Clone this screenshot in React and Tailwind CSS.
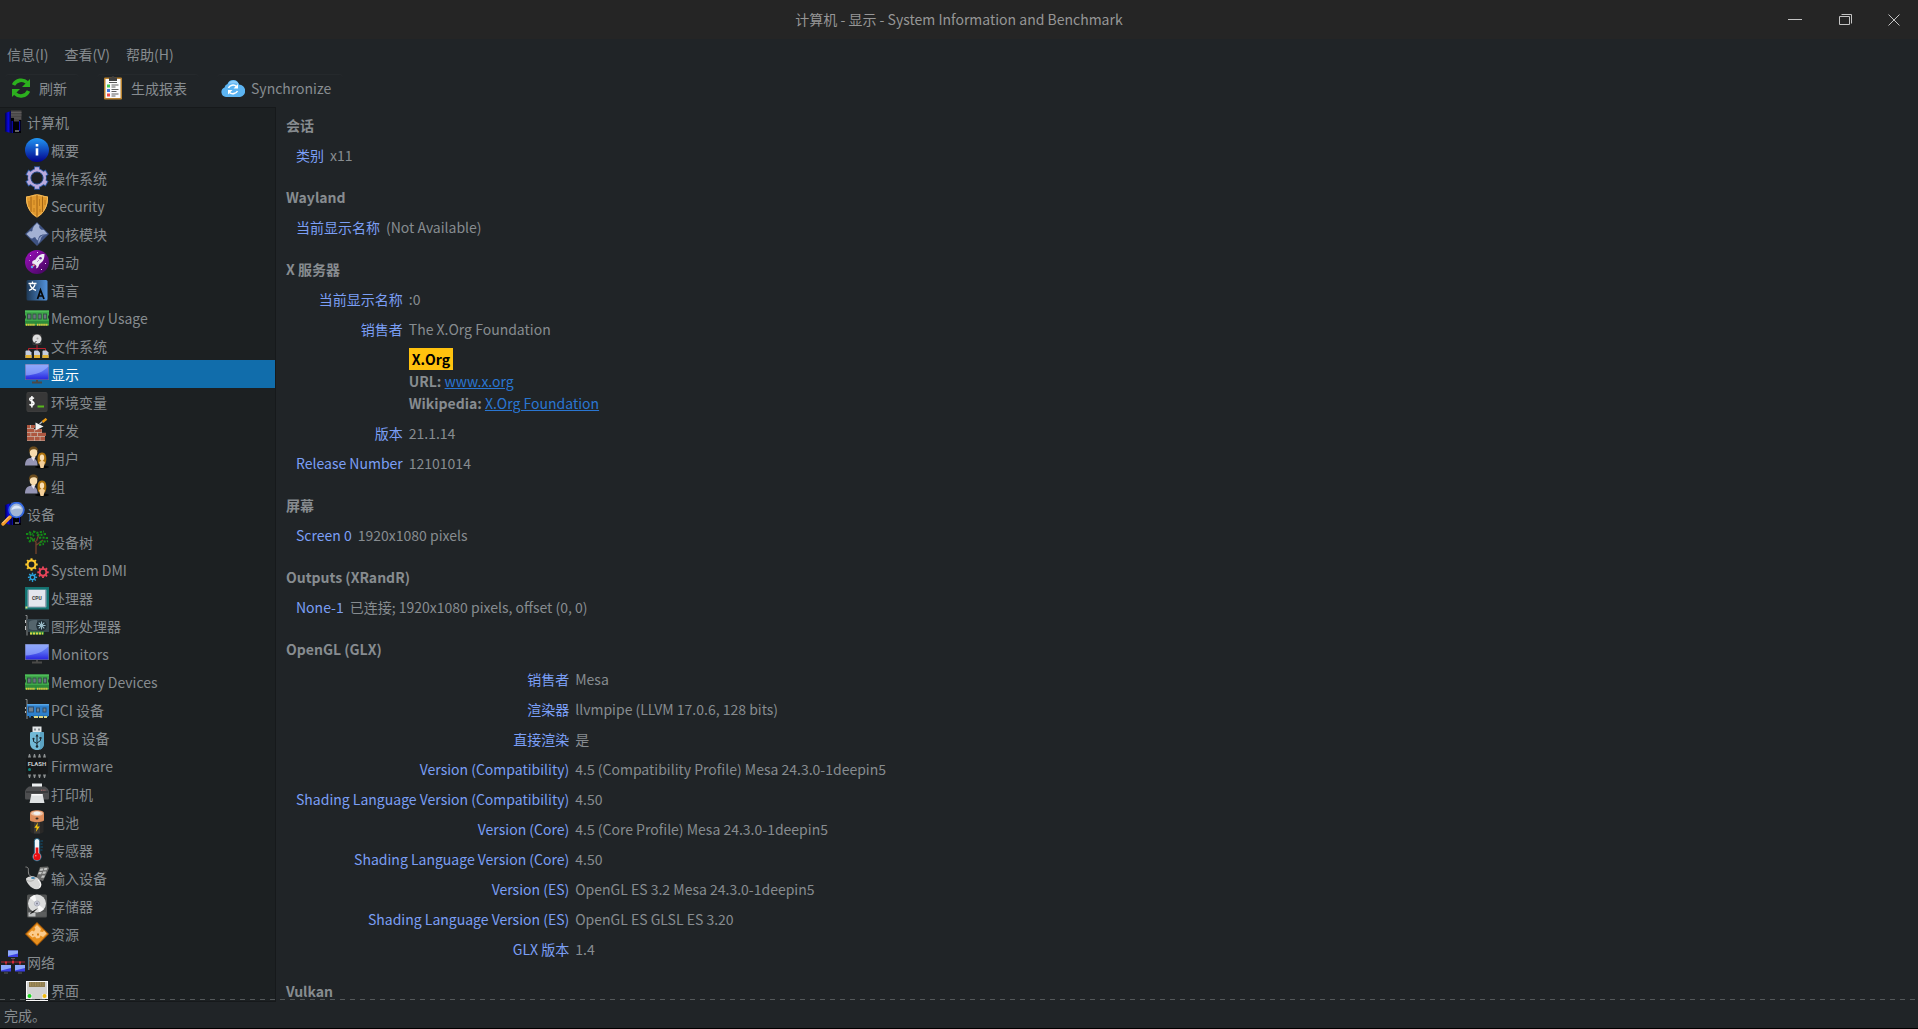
import { useState } from 'react';

const MonitorIcon = () => (
  <svg viewBox="0 0 24 24" className="size-6 shrink-0">
    <defs>
      <linearGradient id="screen" x1="0" y1="0" x2="0" y2="1">
        <stop offset="0" stopColor="#6f8cf5" />
        <stop offset="0.5" stopColor="#5468f0" />
        <stop offset="1" stopColor="#2a26e0" />
      </linearGradient>
    </defs>
    <rect x="0" y="2" width="24" height="16" fill="#6b6f8c" />
    <rect x="0.6" y="2.6" width="22.8" height="14.8" fill="url(#screen)" />
    <path d="M.6 2.600h22.800v1.600C19 9.500 11 13 .6 13.400z" fill="#a9c0ff" opacity=".55" />
    <path d="M11 18h2v1.500h4V21.500H7v-2h4z" fill="#4a4a48" />
  </svg>
);

const MemoryIcon = () => (
  <svg viewBox="0 0 24 24" className="size-6 shrink-0">
    <path d="M0 4.500h24v5h-.8v3h.8v7H0v-7h.8v-3H0z" fill="#3fa84a" />
    <path d="M0 4.500h24V6H0z" fill="#4fbd59" />
    <path d="M0 15h24v3H0z" fill="#2d8b3b" />
    <path d="M2 7.500h4.500v6H2zM7.500 7.500h4v6h-4zM12.700 7.500h4v6h-4zM18 7.500h4v6h-4z" fill="#2d5440" />
    <path d="M3 8.500h2.500v4H3zM8.300 8.500h2.400v4H8.300zM13.500 8.500h2.400v4h-2.400zM18.800 8.500h2.400v4h-2.400z" fill="#6c7480" />
    <path d="M1 18.800h9M12 18.800h11" stroke="#e3c83f" strokeWidth="2" strokeDasharray="1.500 .6" />
  </svg>
);

const PeopleIcon = () => (
  <svg viewBox="0 0 24 24" className="size-6 shrink-0">
    <ellipse cx="17" cy="21" rx="7" ry="1.500" fill="#050505" />
    <path d="M0 19.500c0-5 2-7.500 6-7.500s6.500 2 6.500 7.500z" fill="#9595b4" />
    <path d="M6 11l2.500 4 2-4z" fill="#e9e6ef" />
    <ellipse cx="8.500" cy="6.500" rx="3.800" ry="5" fill="#f7dcae" />
    <path d="M4 7C3.500 2.500 5.500.6 8.700.6c3.500 0 4.600 2.400 4.200 6-.8-3-2-3.600-4.200-3.400C6 3.400 5 4.500 4 7z" fill="#6b4c1d" />
    <path d="M17 6.500c3.500 0 4.300 3 4.300 6.500s-1 5.500-2 5.500h-4.600c-1.400 0-2.200-2.500-2.200-5.500 0-3.500 1-6.500 4.500-6.500z" fill="#ad720c" />
    <path d="M17 8.500c1.700 0 2.200 1.500 2.200 3.300S18.300 15 17 15s-2.200-1.500-2.200-3.200S15.300 8.500 17 8.500z" fill="#fbe0b5" />
    <path d="M14 16l3-1.500 3 1.500-1.500 6h-3z" fill="#f3cf9a" />
  </svg>
);

const ComputerShape = () => (
  <>
    <defs>
      <linearGradient id="tower" x1="0" y1="0" x2="1" y2="0">
        <stop offset="0" stopColor="#000048" />
        <stop offset="0.55" stopColor="#0906e8" />
        <stop offset="1" stopColor="#04043a" />
      </linearGradient>
    </defs>
    <path d="M4 3l6-2v22l-6-1.500z" fill="url(#tower)" />
    <path d="M10 1h10v22H10z" fill="#020204" />
    <path d="M10.500 11h1.500v12h-1.500zM18 11h1.200v10H18z" fill="#0a08a0" />
    <path d="M10 .5h10.500v9.500h-2.500v1.500h-5V8h-3z" fill="#484646" />
    <path d="M10 2.500h10.500M10 5h10.500M13 8h7" stroke="#6a6767" strokeWidth=".7" />
    <path d="M14 20.500h4v1h-4z" fill="#c5c5c5" />
  </>
);

const gear = (cx, cy, r, color, width) => (
  <g stroke={color} fill="none">
    <circle cx={cx} cy={cy} r={r} strokeWidth={width} />
    {[0, 45, 90, 135, 180, 225, 270, 315].map((a) => (
      <path key={a} d={`M${cx} ${cy - r - 0.5}v-1.800`} strokeWidth={width} transform={`rotate(${a} ${cx} ${cy})`} />
    ))}
  </g>
);

const icons = {
  computer: <svg viewBox="0 0 24 24" className="size-6 shrink-0"><ComputerShape /></svg>,
  summary: (
    <svg viewBox="0 0 24 24" className="size-6 shrink-0">
      <defs>
        <linearGradient id="info" x1="0" y1="0" x2="0" y2="1">
          <stop offset="0" stopColor="#2196f3" />
          <stop offset="1" stopColor="#02028c" />
        </linearGradient>
      </defs>
      <circle cx="12" cy="12" r="12" fill="url(#info)" />
      <path d="M10.700 6h2.600v2.500h-2.600zM10.700 10.300h2.600v7.200h-2.600z" fill="#fff" />
    </svg>
  ),
  os: (
    <svg viewBox="0 0 24 24" className="size-6 shrink-0">
      <g stroke="#2d57a0" fill="none">
        <circle cx="12" cy="12" r="7.500" strokeWidth="4.500" />
        {[0, 60, 120, 180, 240, 300].map((a) => (
          <path key={a} d="M12 4V.3" strokeWidth="6" transform={`rotate(${a} 12 12)`} />
        ))}
      </g>
      <g stroke="#b9aadd" fill="none">
        <circle cx="12" cy="12" r="7.600" strokeWidth="2.800" />
        {[0, 60, 120, 180, 240, 300].map((a) => (
          <path key={a} d="M12 4V1.200" strokeWidth="4.200" transform={`rotate(${a} 12 12)`} />
        ))}
      </g>
      <circle cx="12" cy="12" r="6" fill="#1c2022" stroke="#23477e" />
    </svg>
  ),
  security: (
    <svg viewBox="0 0 24 24" className="size-6 shrink-0">
      <path d="M1 2.500C5 2.500 9 .3 12 .3s7 2.200 11 2.200C23.500 12 19 20 12 23.700 5 20 .5 12 1 2.500z" fill="#e29a2e" />
      <path d="M1.500 3C5 3 9 1 12 1s7 2 10.500 2c.3 8.500-3.500 16-10.500 19.700C5 19 1.200 11.500 1.500 3z" fill="none" stroke="#f4bd5e" />
      <path d="M6 2.500v15.500M12 1v22M17.500 2.500V18" stroke="#9c5f13" strokeWidth=".9" />
      <path d="M4 7v6M9 6v5M9 14v4M14.500 5v7M15 15v3M20 6v5" stroke="#b97519" strokeWidth=".8" />
    </svg>
  ),
  kernel: (
    <svg viewBox="0 0 24 24" className="size-6 shrink-0">
      <path d="M12 0l12 12-12 12L0 12z" fill="#3e5282" />
      <path d="M12 1l2.500 2.500c-1 2 .5 3 1.500 4 1 1 2-.5 3 .5l3.500 4-3.500.5c-4 0-5.500 2-6 6L11 17c0-2-2-2-3-1s-2 .5-3-.500L1.500 12 5 9c1.500 1 3 0 2.500-2L9 4z" fill="#a3b1d3" />
      <path d="M21 13c-3 0-5 1.500-5.500 5l-2 3.500c-1-5 2-9 7.500-8.500z" fill="#8b9cc6" />
    </svg>
  ),
  boot: (
    <svg viewBox="0 0 24 24" className="size-6 shrink-0">
      <defs>
        <linearGradient id="boot" x1="0" y1="0" x2="1" y2="1">
          <stop offset="0" stopColor="#a010c0" />
          <stop offset="1" stopColor="#3d0658" />
        </linearGradient>
      </defs>
      <circle cx="12" cy="12" r="12" fill="url(#boot)" />
      <path d="M19.500 4c-4-.2-7 1.500-9 5.500L7.500 11 7 13.500l2.500.5 2 2-.5 2.500 2-1 1.500-3.500c4-2.500 5-5.500 5-10z" fill="#ececf4" />
      <circle cx="15.500" cy="8.300" r="1.300" fill="#74309c" />
      <path d="M12 12l2-2" stroke="#b38fd0" />
      <path d="M9.500 14.500l-2 2" stroke="#f5b07e" strokeWidth="1.500" />
      <circle cx="7" cy="17" r="1.200" fill="#5ba8f2" />
      <path d="M5 5h1v1H5zM12 2h1v1h-1zM16 19h1v1h-1zM20 13h1v1h-1zM4 10h.7v.7H4z" fill="#f0d8ff" />
    </svg>
  ),
  language: (
    <svg viewBox="0 0 24 24" className="size-6 shrink-0">
      <defs>
        <linearGradient id="lang" x1="0" y1="0" x2="1" y2="0">
          <stop offset="0" stopColor="#1d3855" />
          <stop offset="1" stopColor="#5292dc" />
        </linearGradient>
      </defs>
      <rect x="1.500" y="2" width="21" height="20.500" rx="1.500" fill="url(#lang)" />
      <path d="M3.500 5.500h8M7.500 3.500v2M5 6.500c.8 3 3 4.800 6 5.800M10 6.500c-.8 3-3 4.800-6 5.800" stroke="#fff" strokeWidth="1.300" fill="none" />
      <path d="M12.500 21l3-9 3.500 9M13.500 18h4.500" stroke="#080808" strokeWidth="1.700" fill="none" />
    </svg>
  ),
  memory: <MemoryIcon />,
  filesystem: (
    <svg viewBox="0 0 24 24" className="size-6 shrink-0">
      <path d="M12 11v5M3.500 17v-2.500h17V17" stroke="#b5212c" fill="none" />
      <rect x="7.500" y="0" width="9" height="11" rx="1" fill="#3a3a3a" />
      <circle cx="12" cy="5" r="4.500" fill="#dedede" />
      <circle cx="12.500" cy="4.500" r="1" fill="#aaa" />
      <path d="M8.500 10l3-3" stroke="#222" />
      {[0.5, 9, 17.5].map((x) => (
        <g key={x}>
          <path d={`M${x} 17.500q0-1 1-1h3l2 2v5.500h-6z`} fill="#c4cde0" />
          <path d={`M${x} 21h6v3h-6z`} fill="#e0b033" />
        </g>
      ))}
    </svg>
  ),
  display: <MonitorIcon />,
  env: (
    <svg viewBox="0 0 24 24" className="size-6 shrink-0">
      <rect x="1.500" y="2" width="21" height="20" rx="2" fill="#414141" />
      <rect x="2" y="2.500" width="20" height="19" rx="2" fill="#383838" />
      <path d="M9 8.500C7.500 7.200 4.700 7.500 4.700 9.300c0 2.200 4.300 1.700 4.300 4 0 2-2.700 2.300-4.500 1M6.900 6v11.500" stroke="#fff" strokeWidth="1.500" fill="none" />
      <path d="M12.500 15.500h6.500v2h-6.500z" fill="#58b81c" />
    </svg>
  ),
  dev: (
    <svg viewBox="0 0 24 24" className="size-6 shrink-0">
      <path d="M2 7h7v4h8v4h4v3h-1v5H2z" fill="#c9b5a8" />
      <path d="M2 7h3v3H2zM6 7h4v3H6zM2 10.700h7v3.300H2zM9.700 11h7v3H9.700zM2 14.700h3.500V18H2zM6.200 14.700h6V18h-6zM13 14.700h8V18h-8zM2 18.700h7v3.800H2zM9.700 18.700h5v3.800h-5zM15.400 18.700H20v3.800h-4.600z" fill="#ad5740" />
      <path d="M10.500 4.500l8 4-8 4z" fill="#f1f3f3" />
      <path d="M14.500 6l3-2.500" stroke="#bfc4c8" strokeWidth="1.200" />
      <path d="M17.500 4l4-3.200" stroke="#ec9a12" strokeWidth="2.400" />
    </svg>
  ),
  people: <PeopleIcon />,
  devices: (
    <svg viewBox="0 0 24 24" className="size-6 shrink-0">
      <ComputerShape />
      <path d="M2 22l7-7" stroke="#f29a28" strokeWidth="3.400" strokeLinecap="round" />
      <path d="M1.500 21l6.500-6.500" stroke="#ffd69b" strokeWidth="1" />
      <circle cx="15.500" cy="8" r="7.300" fill="#a2b6d6" stroke="#3368e0" strokeWidth="1.800" />
      <path d="M10.500 8c.5-3 2.500-4.500 5-4.500S20 5 20.500 7c-3-.8-6.500-.5-10 1z" fill="#dbe7f8" />
    </svg>
  ),
  tree: (
    <svg viewBox="0 0 24 24" className="size-6 shrink-0">
      <path d="M11 24V12L5 7M11.500 15L18 10M11.500 11L14 4" stroke="#6f412b" strokeWidth="1.400" fill="none" />
      <g stroke="#148a18" strokeWidth="2" strokeDasharray="2.300 1.200" fill="none">
        <path d="M1 4c3 0 5 0 8 2M2 7.500c3 2 4 0 8 2M4 12c2-2 3-2 6-1" />
        <path d="M8 1.500c3 0 3 2 6 1l5-1M12 5c3 1 5-1 9-1M14 8c3-1 5 0 9 0M15 12c3-1 5 0 8-1M14 15l5-1M4 2l4 2" />
      </g>
    </svg>
  ),
  dmi: (
    <svg viewBox="0 0 24 24" className="size-6 shrink-0">
      {gear(6.5, 6.5, 3.9, '#fcc82d', 2)}
      {gear(18, 14.3, 3.4, '#e8455a', 1.9)}
      {gear(7.5, 19.3, 2.3, '#29a5e2', 1.4)}
    </svg>
  ),
  cpu: (
    <svg viewBox="0 0 24 24" className="size-6 shrink-0">
      <rect x="0" y="1" width="24" height="22.500" fill="#16706e" />
      <rect x="1.500" y="2.500" width="21" height="19.500" fill="#0c7c7a" />
      <rect x="2.500" y="3.500" width="19" height="18" rx="1" fill="#9aa4b4" />
      <rect x="4" y="4" width="16" height="16.500" fill="#e3e6ed" />
      <text x="12" y="13.500" textAnchor="middle" className="fill-[#3a3a3a] font-['Roboto',sans-serif] text-[5px] font-bold">CPU</text>
      <path d="M.5 20.500h2v2h-2z" fill="#d6e07a" />
    </svg>
  ),
  gpu: (
    <svg viewBox="0 0 24 24" className="size-6 shrink-0">
      <path d="M.5 1.500h1.500V21.500" stroke="#8b8f90" fill="none" />
      <path d="M.5 6v3M.5 12v4" stroke="#c0c4c4" />
      <path d="M2 5h22v13H3z" fill="#37474f" />
      <path d="M4 8c2-2 5-2 8-2v10c-4 0-8 0-8-2z" fill="#55656d" />
      <circle cx="16.500" cy="11.500" r="5.300" fill="#1f2c34" />
      <path d="M16.500 7.500v8M12.500 11.500h8M13.700 8.700l5.600 5.600M19.300 8.700l-5.600 5.600" stroke="#9bbcc9" strokeWidth="1.100" />
      <path d="M5 19h14" stroke="#388e3c" strokeWidth="3" />
      <path d="M5 19.500h13" stroke="#d9d348" strokeWidth="2" strokeDasharray="2 1" />
    </svg>
  ),
  pci: (
    <svg viewBox="0 0 24 24" className="size-6 shrink-0">
      <path d="M.5 1.500h1.500V21" stroke="#8b8f90" fill="none" />
      <path d="M.5 9v2M.5 13v2" stroke="#b0b4b4" />
      <path d="M2 6h22v12H2z" fill="#2f80cb" />
      <path d="M2 6h22v1.500H2z" fill="#56a5e6" />
      <path d="M3 8.500h6v6H3zM11 9.500h4v5h-4zM17.500 9.500h4v5h-4z" fill="#2e4d6c" />
      <path d="M4 9.500h4v4H4zM12 10.500h2v3h-2zM18.500 10.500h2v3h-2z" fill="#6f8292" />
      <path d="M4 18.500h2M8 18h15" stroke="#2672b5" strokeWidth="2" />
      <path d="M9 19h13" stroke="#dcd787" strokeWidth="2" strokeDasharray="4 1" />
    </svg>
  ),
  usb: (
    <svg viewBox="0 0 24 24" className="size-6 shrink-0">
      <path d="M7.500.5h9V7h-9z" fill="#e2e6e8" />
      <path d="M9 2.500h2v2H9zM13 2.500h2v2h-2z" fill="#8b9296" />
      <path d="M5 7.500c0-1 .5-1.500 1.500-1.500h11c1 0 1.500.5 1.500 1.500V17c0 4.500-3 7-7 7s-7-2.500-7-7z" fill="#72b9d6" />
      <path d="M15 6h2.500c1 0 1.500.5 1.500 1.500V17c0 4-2 6-4 6.700z" fill="#5aa2c2" />
      <path d="M12 9.500v11M8.500 13v2.500l3.500 2M15.500 12v2.500L12 17" stroke="#1d2b33" strokeWidth="1" fill="none" />
      <path d="M12 8l1.500 2.500h-3z" fill="#1d2b33" />
      <circle cx="12" cy="20.500" r="1.300" fill="#1d2b33" />
      <circle cx="8.500" cy="12.800" r="1.100" fill="#1d2b33" />
      <path d="M14.500 11h2v2h-2z" fill="#1d2b33" />
    </svg>
  ),
  firmware: (
    <svg viewBox="0 0 24 24" className="size-6 shrink-0">
      <rect x="1" y="3.500" width="22" height="17" rx="2" fill="#17191a" />
      <path d="M3 3.500h3L5 0H4zM8 3.500h3L10 0H9zM13 3.500h3L15 0h-1zM18 3.500h3L20 0h-1zM3 20.500h3L5 24H4zM8 20.500h3L10 24H9zM13 20.500h3L15 24h-1zM18 20.500h3L20 24h-1z" fill="#8d9192" />
      <text x="12" y="11.500" textAnchor="middle" className="fill-[#c9cdce] font-['Roboto',sans-serif] text-[6px] font-bold">FLASH</text>
      <circle cx="4.500" cy="15.500" r="1.500" fill="#0c8a80" />
    </svg>
  ),
  printer: (
    <svg viewBox="0 0 24 24" className="size-6 shrink-0">
      <path d="M7 1.500h10V6H7z" fill="#eceff0" />
      <path d="M4 4.500h16c2.500 1.500 4 3 4 6v5.500c0 1-.5 1.500-1.500 1.500h-21C.5 17.500 0 17 0 16v-5.500c0-3 1.500-4.500 4-6z" fill="#4d4e50" />
      <path d="M1 9.500h22v1H1z" fill="#29292b" />
      <path d="M16 8.200h5" stroke="#b46a6a" strokeWidth="1" strokeDasharray="1 .7" />
      <path d="M6.500 12h11l2 9h-15z" fill="#dfe2e3" />
      <path d="M6.500 12h11v1.500h-11z" fill="#fafafa" />
    </svg>
  ),
  battery: (
    <svg viewBox="0 0 24 24" className="size-6 shrink-0">
      <path d="M5.500 9h13v13c-2 2.500-11 2.500-13 0z" fill="#292827" />
      <path d="M9 10h6v13.500H9z" fill="#3d3a37" />
      <path d="M5 3.500C5 1.500 8 .3 12 .3s7 1.200 7 3.200v7c-3 2.200-11 2.200-14 0z" fill="#dd8e5d" />
      <ellipse cx="12" cy="3.500" rx="6" ry="2.500" fill="#ecc5ab" />
      <ellipse cx="12" cy="3.200" rx="3.500" ry="1.700" fill="#f1f1f0" />
      <ellipse cx="12" cy="8.500" rx="1.500" ry="1" fill="#3b2a20" />
      <path d="M13 12.500l-3.700 5.300h2.400L10.800 22l4-5.500h-2.600z" fill="#f8c60c" />
    </svg>
  ),
  sensor: (
    <svg viewBox="0 0 24 24" className="size-6 shrink-0">
      <path d="M9.300 3.200a2.700 2.700 0 015.400 0V15.300a4.300 4.300 0 11-5.400 0z" fill="#eef5fa" stroke="#0f5377" strokeWidth=".9" />
      <path d="M10.600 9.500h2.800V16h-2.800z" fill="#e80f14" />
      <circle cx="12" cy="18.700" r="3.600" fill="#e80f14" />
      <circle cx="10.800" cy="17.800" r=".8" fill="#ff9090" />
      <path d="M15.500 3h2.500M15.500 6h2M15.500 9h2.500M15.500 12h2" stroke="#0f5377" strokeWidth="1" />
    </svg>
  ),
  input: (
    <svg viewBox="0 0 24 24" className="size-6 shrink-0">
      <path d="M15 1l8-.5 1 2L18 15l-7-2z" fill="#6b6b6a" />
      <path d="M15.500 2.500h3l-1 2.300h-3zM19.500 2h3l-1 2.300h-3zM14 6h3l-1 2.300h-3zM18.200 5.500h3l-1 2.300h-3zM17 9.500h3l-1 2.300h-3z" fill="#c4c5c4" />
      <path d="M.5 1c4 0 2.500 3 3 6s2 3 4 4" stroke="#8c8c8b" fill="none" />
      <path d="M1 12.500C4 9.500 9 9.500 12.500 12c4 3 5 7.500 2.500 10-3 2.500-8 1-11-3C2.500 17 1 15 1 12.500z" fill="#d8d8d7" />
      <path d="M2 14.500c4 1.500 7 .5 9-3.500" stroke="#a3a39f" fill="none" strokeWidth=".8" />
      <ellipse cx="8" cy="12" rx="2" ry="1.100" fill="#3f83ae" />
      <path d="M13 14c3 3 3.500 6 1 7.500" stroke="#fff" fill="none" />
    </svg>
  ),
  storage: (
    <svg viewBox="0 0 24 24" className="size-6 shrink-0">
      <rect x="2" y=".5" width="20" height="23" rx="1.500" fill="#505252" />
      <path d="M3 18h18v4.500H3z" fill="#5c5e5e" />
      <path d="M3.500 18.500h7v4h-7z" fill="#c1c3c3" />
      <circle cx="12" cy="9.500" r="9" fill="#dbdcdc" />
      <path d="M12 9.500L5 4a9 9 0 015-3zM12 9.500l7 5.500a9 9 0 01-5 3z" fill="#f8f8f8" />
      <circle cx="12" cy="9.500" r="2.600" fill="#cdd0df" stroke="#9ea0ac" strokeWidth=".7" />
      <circle cx="12" cy="9.500" r=".9" fill="#787986" />
      <path d="M4.500 20.500l2.500-3 6-3.500-4.500 4.500z" fill="#1b1b1b" />
    </svg>
  ),
  resources: (
    <svg viewBox="0 0 24 24" className="size-6 shrink-0">
      <path d="M12 0l12 12-12 12L0 12z" fill="#a85a07" />
      <path d="M12 1.300L22.700 12 12 22.700 1.300 12z" fill="#e8901e" />
      <path d="M12 3l4 4-1 2.500 3 .5 1-1.500 2.500 3-3.500 3.500-2.500-1.500-1 2.500-3 .5-1.500-2-2.500 1L3 12l4-3.500 2 1L10.500 7 9.500 5.500z" fill="#fbcb8c" />
      <path d="M12 11.500h2v2h-2zM7 12h1.500v1.500H7z" fill="#dd8212" />
    </svg>
  ),
  network: (
    <svg viewBox="0 0 24 24" className="size-6 shrink-0">
      <path d="M0 12h24M12 8v4M5 12v3M19 12v3" stroke="#a92430" />
      <path d="M11 11h2v2.500h-2zM4 11.500h2v2H4zM18 11.500h2v2h-2z" fill="#d62e38" />
      {[[7, 0.5], [0, 15], [14, 15]].map(([x, y]) => (
        <g key={`${x}-${y}`}>
          <rect x={x} y={y} width="10" height="6.500" fill="#3c40e4" />
          <path d={`M${x} ${y}h10v3l-10 2.500z`} fill="#8fa9fa" />
          <path d={`M${x + 3} ${y + 8}h4`} stroke="#5d5f60" />
        </g>
      ))}
    </svg>
  ),
  interfaces: (
    <svg viewBox="0 0 24 24" className="size-6 shrink-0">
      <rect x="1" y="3" width="22" height="20" fill="#fafafa" />
      <rect x="2" y="4" width="20" height="18" fill="#d2d2d1" />
      <path d="M4 4h16v5H4z" fill="#8d7c50" />
      <path d="M5.500 4v4M8 4v4M10.500 4v4M13 4v4M15.500 4v4M18 4v4" stroke="#a8925a" strokeWidth=".8" />
      <path d="M2 16h5v6H2zM17 16h5v6h-5z" fill="#ededed" />
      <circle cx="4.500" cy="18" r="2" fill="#1ad61e" />
      <circle cx="19.500" cy="18" r="2" fill="#f0b90e" />
    </svg>
  ),
};

const tree = [
  { label: '计算机', icon: 'computer', root: true },
  { label: '概要', icon: 'summary' },
  { label: '操作系统', icon: 'os' },
  { label: 'Security', icon: 'security' },
  { label: '内核模块', icon: 'kernel' },
  { label: '启动', icon: 'boot' },
  { label: '语言', icon: 'language' },
  { label: 'Memory Usage', icon: 'memory' },
  { label: '文件系统', icon: 'filesystem' },
  { label: '显示', icon: 'display' },
  { label: '环境变量', icon: 'env' },
  { label: '开发', icon: 'dev' },
  { label: '用户', icon: 'people' },
  { label: '组', icon: 'people' },
  { label: '设备', icon: 'devices', root: true },
  { label: '设备树', icon: 'tree' },
  { label: 'System DMI', icon: 'dmi' },
  { label: '处理器', icon: 'cpu' },
  { label: '图形处理器', icon: 'gpu' },
  { label: 'Monitors', icon: 'display' },
  { label: 'Memory Devices', icon: 'memory' },
  { label: 'PCI 设备', icon: 'pci' },
  { label: 'USB 设备', icon: 'usb' },
  { label: 'Firmware', icon: 'firmware' },
  { label: '打印机', icon: 'printer' },
  { label: '电池', icon: 'battery' },
  { label: '传感器', icon: 'sensor' },
  { label: '输入设备', icon: 'input' },
  { label: '存储器', icon: 'storage' },
  { label: '资源', icon: 'resources' },
  { label: '网络', icon: 'network', root: true },
  { label: '界面', icon: 'interfaces' },
];

const XOrgVendor = () => (
  <>
    <p>The X.Org Foundation</p>
    <p className="mt-2">
      <span className="inline-block bg-[#ffc20e] px-[3px] font-bold text-black">X.Org</span>
    </p>
    <p>
      <b>URL:</b> <a href="#xorg" className="text-[#2a76d2] underline">www.x.org</a>
    </p>
    <p>
      <b>Wikipedia:</b> <a href="#wikipedia" className="text-[#2a76d2] underline">X.Org Foundation</a>
    </p>
  </>
);

const sections = [
  { title: '会话', rows: [['类别', 'x11']] },
  { title: 'Wayland', rows: [['当前显示名称', '(Not Available)']] },
  {
    title: 'X 服务器',
    rows: [
      ['当前显示名称', ':0'],
      ['销售者', <XOrgVendor />],
      ['版本', '21.1.14'],
      ['Release Number', '12101014'],
    ],
  },
  { title: '屏幕', rows: [['Screen 0', '1920x1080 pixels']] },
  { title: 'Outputs (XRandR)', rows: [['None-1', '已连接; 1920x1080 pixels, offset (0, 0)']] },
  {
    title: 'OpenGL (GLX)',
    rows: [
      ['销售者', 'Mesa'],
      ['渲染器', 'llvmpipe (LLVM 17.0.6, 128 bits)'],
      ['直接渲染', '是'],
      ['Version (Compatibility)', '4.5 (Compatibility Profile) Mesa 24.3.0-1deepin5'],
      ['Shading Language Version (Compatibility)', '4.50'],
      ['Version (Core)', '4.5 (Core Profile) Mesa 24.3.0-1deepin5'],
      ['Shading Language Version (Core)', '4.50'],
      ['Version (ES)', 'OpenGL ES 3.2 Mesa 24.3.0-1deepin5'],
      ['Shading Language Version (ES)', 'OpenGL ES GLSL ES 3.20'],
      ['GLX 版本', '1.4'],
    ],
  },
  { title: 'Vulkan', rows: [] },
];

const TitleBar = () => (
  <header className="grid h-[39px] shrink-0 grid-cols-[1fr_auto_1fr] items-center bg-[#252525]">
    <h1 className="col-start-2 pb-0.5 text-[#969696]">计算机 - 显示 - System Information and Benchmark</h1>
    <div className="flex justify-end text-[#c4c4c4]">
      <button aria-label="Minimize" className="flex h-[38px] w-[50px] items-center justify-center">
        <svg viewBox="0 0 14 14" className="size-3.5" stroke="currentColor"><path d="M0 6.500h14" /></svg>
      </button>
      <button aria-label="Restore" className="flex h-[38px] w-[50px] items-center justify-center">
        <svg viewBox="0 0 14 14" className="size-3.5" stroke="currentColor" fill="none">
          <path d="M1.500 3.500h10v8h-10zM3.500 1.500h10v9" />
        </svg>
      </button>
      <button aria-label="Close" className="flex h-[38px] w-12 items-center justify-center">
        <svg viewBox="0 0 14 14" className="size-3.5" stroke="currentColor"><path d="M1.500 1.500l11 11M12.500 1.500l-11 11" /></svg>
      </button>
    </div>
  </header>
);

const Toolbar = () => (
  <div className="flex h-9 shrink-0 gap-[18px] pt-[3px] pb-1.5 pl-[5px]">
    <button className="flex items-center gap-1.5 rounded-sm border-t border-[#25292c] pr-3 pl-1">
      <svg viewBox="0 0 24 24" className="size-6" fill="none" stroke="#2cb01e" strokeWidth="3.600">
        <path d="M4.500 9C7 4 14 2.500 18 6.500M19.500 15C17 20.500 10 21.500 6 17.500" />
        <path d="M21 3v8h-8zM3 21v-8h8z" fill="#2cb01e" stroke="none" />
      </svg>
      刷新
    </button>
    <button className="flex items-center gap-1.5 rounded-sm border-t border-[#25292c] pr-3 pl-1">
      <svg viewBox="0 0 24 24" className="size-6">
        <rect x="3" y="1.500" width="18" height="22" rx="1" fill="#b9822f" />
        <rect x="4.500" y="3" width="15" height="19" fill="#fbfbfb" />
        <path d="M8 1.500h2.500a1.500 1.500 0 013 0H16V5H8z" fill="#3f3f3f" />
        <path d="M8 6.500h8" stroke="#555" />
        <path d="M6 8.500h3v3H6z" fill="#3fc951" />
        <path d="M6 13h3v3H6z" fill="#4178e0" />
        <path d="M6 17.500h3v3H6z" fill="#f14a4a" />
        <path d="M10.500 9h7M10.500 11h4M10.500 13.500h7M10.500 15.500h5M10.500 18h7M10.500 20h4" stroke="#616161" />
      </svg>
      生成报表
    </button>
    <button className="flex items-center gap-1.5 rounded-sm border-t border-[#25292c] pr-3 pl-1">
      <svg viewBox="0 0 24 24" className="size-6">
        <path d="M5 21a5 5 0 01-1.500-9.600A4.500 4.500 0 016.500 8 6 6 0 0118 8.500 6.300 6.300 0 0119 21z" fill="#5cb4f2" />
        <path d="M7 8a6 6 0 0111 .5c-3-1.500-8-1.500-11-.5z" fill="#8bcbf9" />
        <g fill="none" stroke="#fff" strokeWidth="1.600">
          <path d="M7.500 12c1-3 5.500-4 8-1.500M16.500 15c-1.500 3-6 3.500-8 1.500" />
          <path d="M17 8v4.500h-4.500zM7 18.500V14h4.500z" fill="#fff" stroke="none" />
        </g>
      </svg>
      Synchronize
    </button>
  </div>
);

export default function App() {
  const [selected, setSelected] = useState(9);

  return (
    <div className="flex h-screen flex-col overflow-hidden border-b border-black bg-[#202427] font-['Noto_Sans_CJK_SC',sans-serif] text-sm leading-[22px] text-[#878c90]">
      <TitleBar />
      <nav className="flex h-8 shrink-0 items-center gap-4 pb-0.5 pl-[7px]">
        <button>信息(I)</button>
        <button>查看(V)</button>
        <button>帮助(H)</button>
      </nav>
      <Toolbar />
      <main className="flex min-h-0 flex-1">
        <aside className="relative w-[276px] shrink-0 overflow-hidden border border-l-0 border-[#16191b] bg-[#1c2022]">
          <ul>
            {tree.map((item, i) => (
              <li key={item.label}>
                <button
                  onClick={() => setSelected(i)}
                  className={`flex h-7 w-full items-center gap-0.5 text-left ${item.root ? 'pl-px' : 'pl-[25px]'} ${selected === i ? 'bg-[#116dab] text-white' : ''}`}
                >
                  {icons[item.icon]}
                  {item.label}
                </button>
              </li>
            ))}
          </ul>
          {/* overflow hint at the bottom edge */}
          <div className="absolute inset-x-0 bottom-px h-px bg-[repeating-linear-gradient(to_right,#54585a_0_5px,#1c2022_5px_10px)]"></div>
        </aside>
        <section className="relative ml-1 flex-1 overflow-hidden pt-[7px] pl-1.5">
          {sections.map((s) => (
            <div key={s.title} className="mb-5">
              <h2 className="font-bold">{s.title}</h2>
              <dl className="mt-2 grid grid-cols-[max-content_1fr] gap-x-1.5 gap-y-2 pl-2.5">
                {s.rows.map(([label, value]) => (
                  <div key={label} className="contents">
                    <dt className="text-right text-[#7b9ff5]">{label}</dt>
                    <dd>{value}</dd>
                  </div>
                ))}
              </dl>
            </div>
          ))}
          <div className="absolute inset-x-0 bottom-0.5 h-px bg-[repeating-linear-gradient(to_right,#54585a_0_5px,#202427_5px_10px)]"></div>
        </section>
      </main>
      <footer className="h-[26px] shrink-0 px-1 pt-0.5">完成。</footer>
    </div>
  );
}
